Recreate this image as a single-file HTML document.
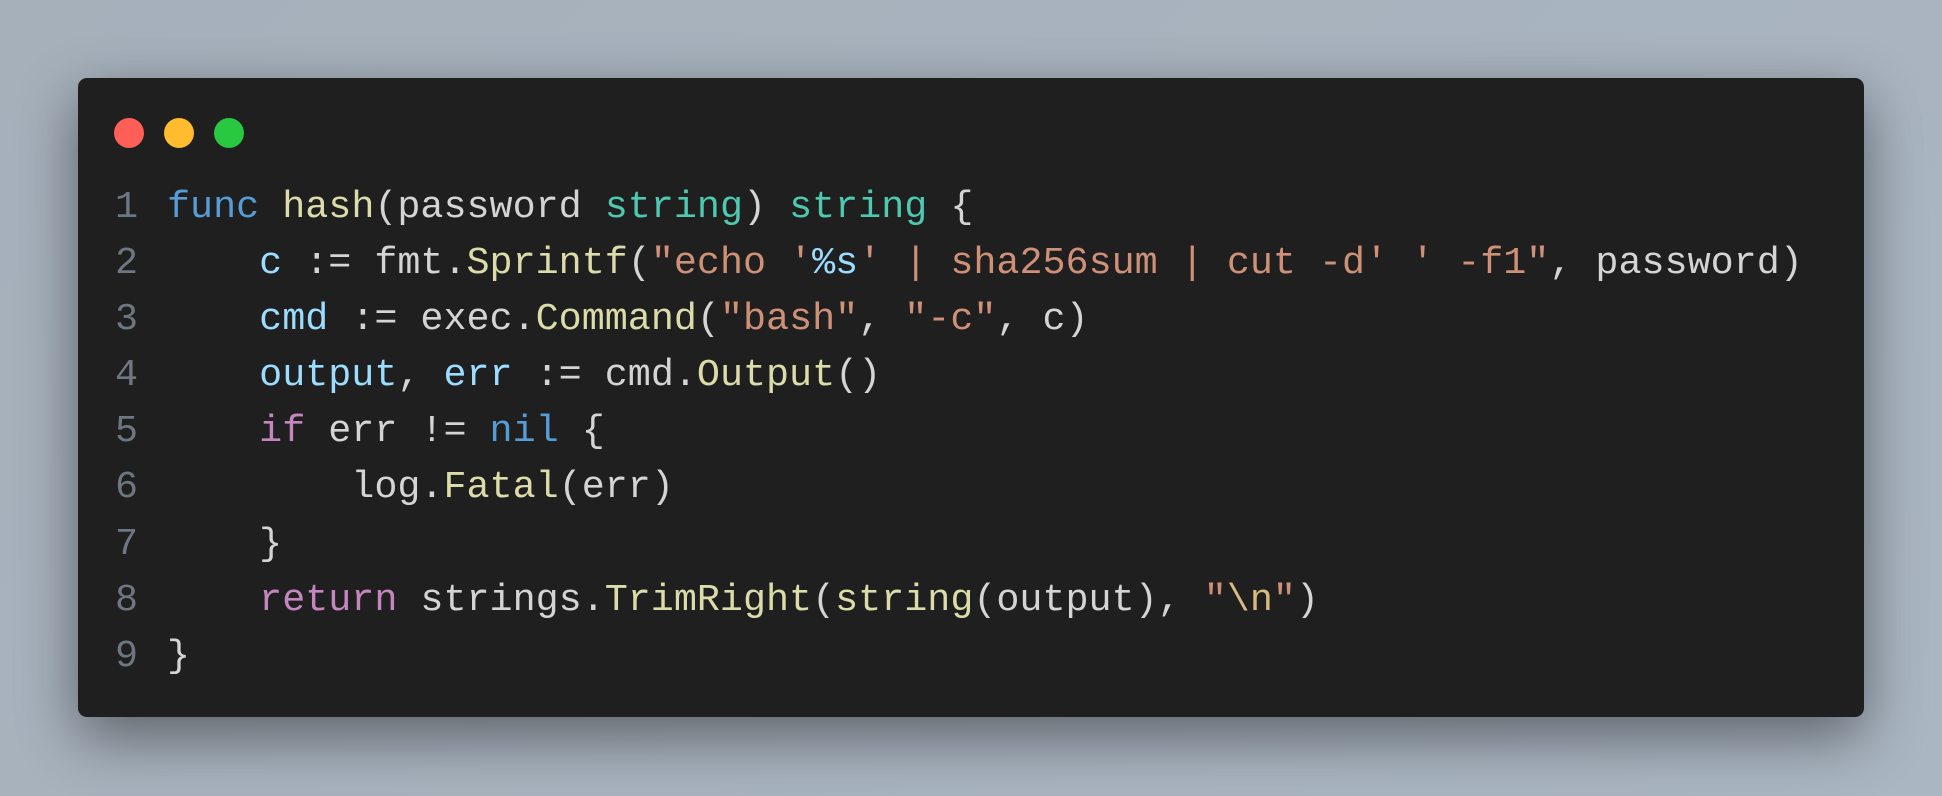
<!DOCTYPE html>
<html><head><meta charset="utf-8"><style>
html,body{margin:0;padding:0}
body{width:1942px;height:796px;background:linear-gradient(135deg,#a6b0bb,#aab6c2);position:relative;overflow:hidden}
.win{position:absolute;left:78px;top:78px;width:1786px;height:639px;background:#1f1f1f;border-radius:9px;box-shadow:0 20px 60px rgba(0,0,0,0.45)}
.dot{position:absolute;top:118px;width:30px;height:30px;border-radius:50%}
.code{position:absolute;left:115px;top:179px;font-family:"Liberation Mono",monospace;font-size:38.4px;line-height:56.1px;color:#d4d4d4;white-space:pre}
.n{color:#6e7681;display:inline-block;width:52px}
.k{color:#569cd6}.f{color:#dcdcaa}.t{color:#4ec9b0}.s{color:#ce9178}.v{color:#9cdcfe}.c{color:#c586c0}.e{color:#d7ba7d}
</style></head><body>
<div class="win"></div>
<div class="dot" style="left:114px;background:#ff5f57"></div>
<div class="dot" style="left:164px;background:#febc2e"></div>
<div class="dot" style="left:214px;background:#28c840"></div>
<div class="code"><span class="n">1</span><span class="k">func</span> <span class="f">hash</span>(password <span class="t">string</span>) <span class="t">string</span> {
<span class="n">2</span>    <span class="v">c</span> := fmt.<span class="f">Sprintf</span>(<span class="s">"echo '</span><span class="v">%s</span><span class="s">' | sha256sum | cut -d' ' -f1"</span>, password)
<span class="n">3</span>    <span class="v">cmd</span> := exec.<span class="f">Command</span>(<span class="s">"bash"</span>, <span class="s">"-c"</span>, c)
<span class="n">4</span>    <span class="v">output</span>, <span class="v">err</span> := cmd.<span class="f">Output</span>()
<span class="n">5</span>    <span class="c">if</span> err != <span class="k">nil</span> {
<span class="n">6</span>        log.<span class="f">Fatal</span>(err)
<span class="n">7</span>    }
<span class="n">8</span>    <span class="c">return</span> strings.<span class="f">TrimRight</span>(<span class="f">string</span>(output), <span class="s">"</span><span class="e">\n</span><span class="s">"</span>)
<span class="n">9</span>}</div>
</body></html>
